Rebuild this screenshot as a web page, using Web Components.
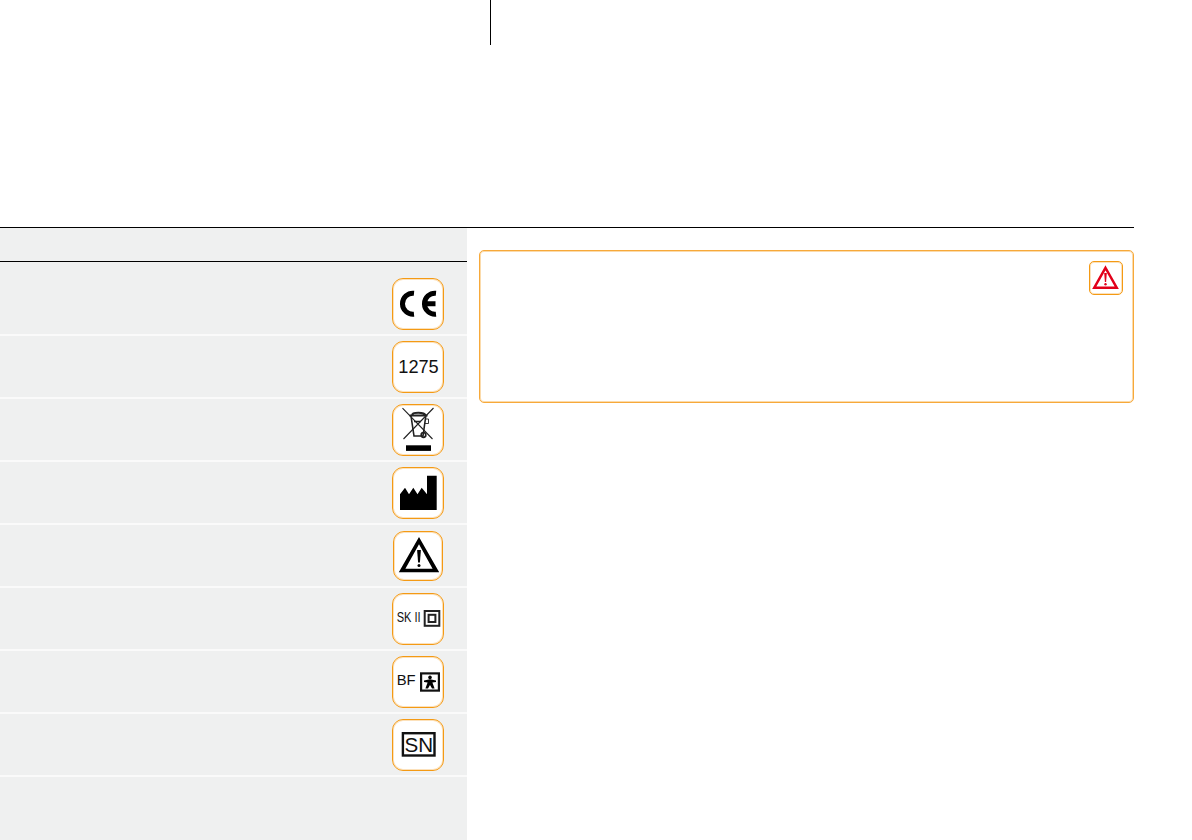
<!DOCTYPE html>
<html lang="en">
<head>
<meta charset="utf-8">
<title>Symbols</title>
<style>
  html, body { margin: 0; height: 100%; background: #fff; font-family: "Liberation Sans", Arial, sans-serif; }
</style>
</head>
<body>
<manual-page>
  <symbol-list slot="left">
    <symbol-row first>
      <symbol-tile>
        <svg viewBox="0 0 52 52" fill="none" stroke="#000" stroke-width="5">
          <path d="M22 15.25A10.5 10.5 0 1 0 22 36.15"/>
          <path d="M44 15.25A10.5 10.5 0 1 0 44 36.15M32.5 25.7H43.5"/>
        </svg>
      </symbol-tile>
    </symbol-row>
    <symbol-row>
      <symbol-tile>
        <svg viewBox="0 0 52 52"><text x="26.5" y="32" text-anchor="middle" font-size="18.2" fill="#111">1275</text></svg>
      </symbol-tile>
    </symbol-row>
    <symbol-row>
      <symbol-tile>
        <svg viewBox="0 0 52 52" fill="none" stroke="#222" stroke-width="1.1">
          <path d="M10.5 4.2 40.5 35M41.5 4 11.5 35"/>
          <path d="M17.5 11.5H35.5M20 11.2C20 8 32.5 8 33.5 11.2" stroke-width="1.9"/>
          <path d="M19 12 22 32H31L33.8 12" stroke-width="1.6"/>
          <path d="M33.5 15H36.5V19.5H33" stroke-width=".9"/>
          <path d="M22 17.5H29" stroke-width="1.3"/>
          <circle cx="31.5" cy="31" r="2.3" stroke-width="1.7"/>
          <rect x="14" y="41.3" width="25" height="5.6" fill="#000" stroke="none"/>
        </svg>
      </symbol-tile>
    </symbol-row>
    <symbol-row>
      <symbol-tile>
        <svg viewBox="0 0 52 52"><path d="M8 43V27.3L13 20.7 17 27.3 21.3 20.7 25.5 27.3 29.7 20.7 35 27.3V8.7H44.7V43Z"/></svg>
      </symbol-tile>
    </symbol-row>
    <symbol-row>
      <symbol-tile warn>
        <svg viewBox="1 0 50 50">
          <path fill-rule="evenodd" d="M27 6 47.2 41.2H6.8ZM27 13.2 13.4 37.8H40.6Z"/>
          <path d="M25.1 19H28.9L27.9 31.6H26.1Z"/>
          <circle cx="27" cy="34.6" r="1.5"/>
        </svg>
      </symbol-tile>
    </symbol-row>
    <symbol-row>
      <symbol-tile>
        <svg viewBox="0 0 52 52">
          <text x="4.7" y="28.6" font-size="13.8" textLength="24" lengthAdjust="spacingAndGlyphs" fill="#111">SK II</text>
          <rect x="32.7" y="18" width="14.6" height="14.8" fill="none" stroke="#222" stroke-width="2"/>
          <rect x="36.6" y="21.8" width="6.8" height="7.2" fill="none" stroke="#222" stroke-width="2"/>
        </svg>
      </symbol-tile>
    </symbol-row>
    <symbol-row>
      <symbol-tile>
        <svg viewBox="0 0 52 52">
          <text x="4.7" y="29" font-size="14.8" fill="#111">BF</text>
          <rect x="29.1" y="17.4" width="17.8" height="17.2" fill="none" stroke="#111" stroke-width="2.2"/>
          <circle cx="38" cy="21.4" r="1.8"/>
          <path d="M38 23.2 44 24.6V26L40.4 26.4 42.6 32.6H40L38 29 36 32.6H33.4L35.6 26.4 32 26V24.6Z"/>
        </svg>
      </symbol-tile>
    </symbol-row>
    <symbol-row>
      <symbol-tile>
        <svg viewBox="0 0 52 52">
          <rect x="10.9" y="14.2" width="31.6" height="22.3" fill="none" stroke="#111" stroke-width="2.4"/>
          <text x="26.7" y="32.7" text-anchor="middle" font-size="20.6" fill="#111">SN</text>
        </svg>
      </symbol-tile>
    </symbol-row>
  </symbol-list>
  <warning-panel slot="right">
    <symbol-tile small>
      <svg viewBox="0 0 34 34"><path fill="none" stroke="#e2001a" stroke-width="2.4" d="M16.5 6.8 27.8 26.8H5.2Z"/>
        <path fill="#e2001a" d="M15.2 12H17.8L17.1 21H15.9Z"/><circle cx="16.5" cy="23.2" r="1.2" fill="#e2001a"/></svg>
    </symbol-tile>
  </warning-panel>
</manual-page>

<script>
class ManualPage extends HTMLElement {
  constructor() {
    super();
    this.attachShadow({ mode: 'open' });
    this.shadowRoot.innerHTML = `
    <style>
      :host { display: flex; flex-direction: column; height: 840px; overflow: hidden; }
      .tick { width: 1px; height: 45px; margin-left: 490px; background: #000; flex: none; }
      .gap { height: 182px; flex: none; }
      .columns {
        flex: 1;
        width: 1134px;
        border-top: 1px solid #000;
        display: grid;
        grid-template-columns: 467px 1fr;
        min-height: 0;
      }
      .right { padding: 22px 0 0 12px; }
    </style>
    <div class="tick"></div>
    <div class="gap"></div>
    <div class="columns">
      <slot name="left"></slot>
      <div class="right"><slot name="right"></slot></div>
    </div>`;
  }
}

class SymbolList extends HTMLElement {
  constructor() {
    super();
    this.attachShadow({ mode: 'open' });
    this.shadowRoot.innerHTML = `
    <style>
      :host { display: block; background: #eff0f0; }
      .head { height: 33px; border-bottom: 1px solid #000; }
    </style>
    <div class="head"></div>
    <slot></slot>`;
  }
}

class SymbolRow extends HTMLElement {
  constructor() {
    super();
    this.attachShadow({ mode: 'open' });
    this.shadowRoot.innerHTML = `
    <style>
      :host {
        display: flex;
        justify-content: flex-end;
        padding: 5px 23px 4px 0;
        border-bottom: 2px solid #fafafa;
      }
      :host([first]) { padding-top: 16px; }
    </style>
    <slot></slot>`;
  }
}

class SymbolTile extends HTMLElement {
  constructor() {
    super();
    this.attachShadow({ mode: 'open' });
    this.shadowRoot.innerHTML = `
    <style>
      :host {
        display: block;
        box-sizing: border-box;
        width: 52px;
        height: 52px;
        background: #fff;
        border: 1px solid #f49a14;
        box-shadow: inset 0 0 0 1px rgba(246, 170, 60, .35);
        border-radius: 11px;
        font-family: "Liberation Sans", Arial, sans-serif;
        overflow: hidden;
      }
      :host([warn]) { width: 50px; height: 50px; margin: 1px; }
      :host([small]) { width: 34px; height: 34px; border-radius: 5px; }
      .inner { margin: -1px; height: calc(100% + 2px); }
      ::slotted(svg) { display: block; width: 100%; height: 100%; }
    </style>
    <div class="inner"><slot></slot></div>`;
  }
}

class WarningPanel extends HTMLElement {
  constructor() {
    super();
    this.attachShadow({ mode: 'open' });
    this.shadowRoot.innerHTML = `
    <style>
      :host {
        display: flex;
        justify-content: flex-end;
        box-sizing: border-box;
        width: 655px;
        height: 153px;
        padding: 10px 10px 0 0;
        border: 1px solid #f7a93a;
        box-shadow: inset 0 0 0 1px rgba(247, 175, 70, .45);
        border-radius: 5px;
      }
    </style>
    <slot></slot>`;
  }
}

customElements.define('manual-page', ManualPage);
customElements.define('symbol-list', SymbolList);
customElements.define('symbol-row', SymbolRow);
customElements.define('symbol-tile', SymbolTile);
customElements.define('warning-panel', WarningPanel);
</script>
</body>
</html>
